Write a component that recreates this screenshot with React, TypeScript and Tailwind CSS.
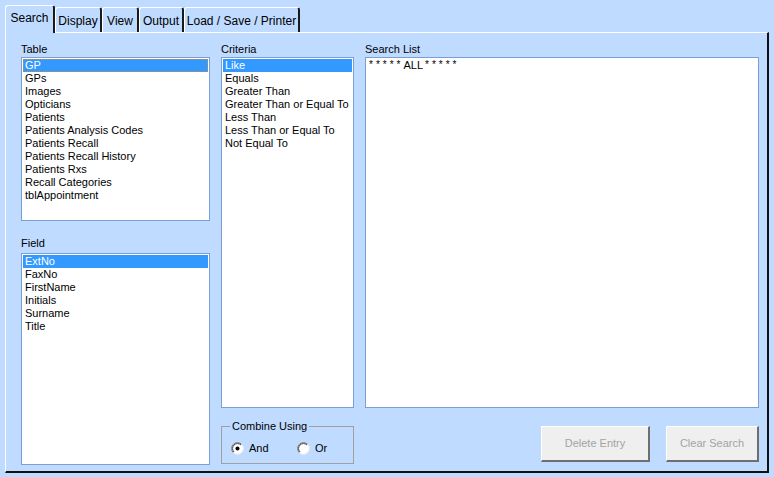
import React from 'react'

const tables = [
  'GP',
  'GPs',
  'Images',
  'Opticians',
  'Patients',
  'Patients Analysis Codes',
  'Patients Recall',
  'Patients Recall History',
  'Patients Rxs',
  'Recall Categories',
  'tblAppointment',
]

const fields = ['ExtNo', 'FaxNo', 'FirstName', 'Initials', 'Surname', 'Title']

const criteria = [
  'Like',
  'Equals',
  'Greater Than',
  'Greater Than or Equal To',
  'Less Than',
  'Less Than or Equal To',
  'Not Equal To',
]

const tabs = [
  { label: 'Search', w: 50 },
  { label: 'Display', w: 47 },
  { label: 'View', w: 37 },
  { label: 'Output', w: 45 },
  { label: 'Load / Save / Printer', w: 116 },
]

const ListBox = ({
  items,
  className,
  focus,
}: {
  items: string[]
  className: string
  focus?: boolean
}) => (
  <div className={`border border-[#7A9ED6] bg-white p-px ${className}`}>
    {items.map((item, i) => (
      <div
        key={item}
        className={`h-[13px] pl-[2px] leading-[13px] whitespace-nowrap ${
          i === 0
            ? `bg-[#3399FF] text-white ${
                focus ? 'outline outline-1 -outline-offset-1 outline-dotted outline-[#D08A3A]' : ''
              }`
            : 'text-black'
        }`}
      >
        {item}
      </div>
    ))}
  </div>
)

const Radio = ({ checked }: { checked?: boolean }) => (
  <svg width="13" height="13" viewBox="0 0 13 13" className="shrink-0">
    <circle cx="6.5" cy="6.5" r="5.5" fill="#fff" stroke="#fff" />
    <path d="M2.3 10.7 A5.5 5.5 0 0 1 10.7 2.3" fill="none" stroke="#808080" />
    <path d="M3 10 A4.5 4.5 0 0 1 10 3" fill="none" stroke="#404040" />
    <path d="M10.7 2.3 A5.5 5.5 0 0 1 2.3 10.7" fill="none" stroke="#E8E8E8" />
    {checked && <circle cx="6.5" cy="6.5" r="2" fill="#000" />}
  </svg>
)

const Button = ({ label, w }: { label: string; w: string }) => (
  <div
    className={`${w} flex h-[36px] items-center justify-center border-t border-l border-t-white border-l-white border-r-2 border-b-2 border-r-[#6E6E6E] border-b-[#6E6E6E] bg-[#EFEFEF] text-[#A3A3A3]`}
  >
    {label}
  </div>
)

const Stars = () => (
  <span className="relative -top-[1px] text-[10px] tracking-[3px]">*****</span>
)

export default function App() {
  return (
    <div
      className="h-[477px] w-[774px] overflow-hidden bg-[#BFDBFF] text-[11px] text-black"
      style={{ fontFamily: '"Liberation Sans", Arial, sans-serif' }}
    >
      <div className="pt-[5px] pl-[5px]">
        <div className="flex h-[27px] items-end">
          {tabs.map((t, i) => (
            <div
              key={t.label}
              style={{ width: t.w }}
              className={`flex items-center justify-center rounded-t-[3px] border-t border-l border-r-2 border-t-white border-l-white border-r-[#1A1A1A] bg-[#BFDBFF] ${
                i === 0
                  ? 'relative z-10 -mb-px h-[28px] pb-[4px]'
                  : 'h-[25px] pt-[2px]'
              }`}
            >
              <span className="text-[12px]">{t.label}</span>
            </div>
          ))}
        </div>
        <div className="flex h-[441px] w-[764px] gap-[11px] border-t border-l border-r-2 border-b-2 border-t-white border-l-white border-r-[#111] border-b-[#111] pt-[8px] pl-[15px]">
          <div className="flex w-[189px] flex-col">
            <div className="h-[16px] leading-[16px]">Table</div>
            <ListBox items={tables} focus className="h-[164px]" />
            <div className="h-[32px] pt-[14px] leading-[16px]">Field</div>
            <ListBox items={fields} className="h-[212px]" />
          </div>
          <div className="flex w-[133px] flex-col">
            <div className="h-[16px] leading-[16px]">Criteria</div>
            <ListBox items={criteria} className="h-[351px]" />
            <fieldset className="mt-[12px] h-[44px] border border-[#A0A0A0] pr-[10px] pl-[9px]">
              <legend className="ml-[-1px] px-[2px] leading-[12px]">Combine Using</legend>
              <div className="flex items-center pt-[8px]">
                <Radio checked />
                <span className="ml-[5px] w-[48px]">And</span>
                <Radio />
                <span className="ml-[5px]">Or</span>
              </div>
            </fieldset>
          </div>
          <div className="flex w-[394px] flex-col">
            <div className="h-[16px] leading-[16px]">Search List</div>
            <div className="h-[351px] border border-[#7A9ED6] bg-white px-[3px] pt-[1px] leading-[13px] whitespace-nowrap">
              <Stars />
              ALL
              <span className="ml-[2px]" />
              <Stars />
            </div>
            <div className="mt-[18px] flex justify-end gap-[16px]">
              <Button label="Delete Entry" w="w-[109px]" />
              <Button label="Clear Search" w="w-[93px]" />
            </div>
          </div>
        </div>
      </div>
    </div>
  )
}
